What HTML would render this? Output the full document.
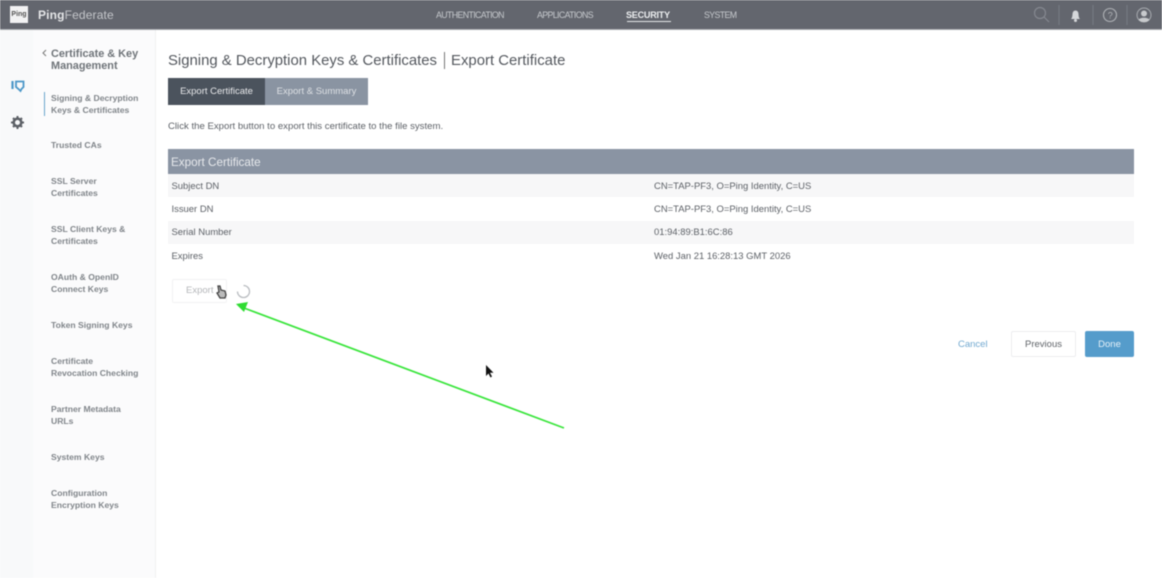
<!DOCTYPE html>
<html><head><meta charset="utf-8"><style>
html,body{margin:0;padding:0}
body{width:1162px;height:578px;position:relative;overflow:hidden;background:#fff;font-family:"Liberation Sans",sans-serif;color:#555b61;filter:blur(.5px)}
.a{position:absolute;white-space:nowrap}
.nav{font-size:8.8px;color:#c6c9cd;top:9.5px;letter-spacing:-.62px}
.s{font-size:8.6px;font-weight:bold;color:#80858a;left:51px;line-height:12px;margin-top:-1px}
.r{left:168px;width:966px;height:23px}
.t{font-size:9.45px;line-height:12px;color:#5d6167}
</style></head><body>
<div class="a" style="left:0;top:0;width:1162px;height:29px;background:#63666e;border-bottom:1px solid #a9acb0"></div>
<div class="a" style="left:10px;top:6px;width:18px;height:17px;background:#f2f2f3;color:#555;font-size:7px;line-height:17px;text-align:center;font-weight:bold">Ping</div>
<div class="a" style="left:38px;top:8px;font-size:12px;line-height:15px;color:#e4e5e7;letter-spacing:.15px"><b>Ping</b><span style="color:#c4c6ca">Federate</span></div>
<div class="a nav" style="left:436px">AUTHENTICATION</div>
<div class="a nav" style="left:537px">APPLICATIONS</div>
<div class="a nav" style="left:626px;color:#eceef0;font-weight:bold;font-size:9px;letter-spacing:-.2px">SECURITY</div>
<div class="a" style="left:627px;top:21px;width:44px;height:1px;background:#e6e8ea"></div>
<div class="a nav" style="left:704px">SYSTEM</div>
<svg class="a" style="left:1030px;top:3px" width="130" height="24" fill="none">
<circle cx="10" cy="10" r="5.5" stroke="#858890" stroke-width="1.2"/><path d="M14 14l5 5" stroke="#858890" stroke-width="1.2"/>
<path d="M29 2v20M63 2v20M97 2v20" stroke="#777a82"/>
<path d="M41 16c2-2 1-5 2-7 1-2 4-2 5 0 1 2 0 5 2 7z" fill="#d5d7da"/><circle cx="45.500" cy="17.500" r="1.500" fill="#d5d7da"/>
<circle cx="80" cy="12" r="6.500" stroke="#b0b3b7" stroke-width="1.100"/><text x="77.700" y="15.500" font-size="9" fill="#b0b3b7" font-family="Liberation Sans">?</text>
<circle cx="114" cy="12" r="7" stroke="#a8abb0" stroke-width="1"/><circle cx="114" cy="10.500" r="3" fill="#c8cacd"/><path d="M108.500 17c1-3 10-3 11 0l-3 2h-5z" fill="#c8cacd"/>
</svg>
<div class="a" style="left:0;top:30px;width:33px;height:548px;background:#f8f9fa"></div>
<div class="a" style="left:33px;top:30px;width:122px;height:548px;background:#fbfbfc;border-right:1px solid #f0f1f2"></div>
<svg class="a" style="left:10px;top:79px" width="16" height="14" fill="none"><path d="M6 2.500h7.500v5.500l-2 2-1 2-2-2-2.500-2z" stroke="#4b97c8" stroke-width="1.800"/><path d="M2.500 2v8" stroke="#4b97c8" stroke-width="2.200"/></svg>
<svg class="a" style="left:10px;top:115px" width="15" height="15"><circle cx="7.500" cy="7.500" r="3.800" fill="none" stroke="#5d6167" stroke-width="2.600"/><path d="M7.500 1v3M7.500 11v3M1 7.500h3M11 7.500h3M3 3l2 2M10 10l2 2M12 3l-2 2M5 10l-2 2" stroke="#5d6167" stroke-width="2"/></svg>
<svg class="a" style="left:41px;top:49px" width="7" height="9" fill="none"><path d="M5 1L2 4l3 3" stroke="#777" /></svg>
<div class="a" style="left:51px;top:48px;font-size:10.9px;font-weight:bold;color:#6f7479;line-height:12px">Certificate &amp; Key<br>Management</div>
<div class="a" style="left:44px;top:92px;width:1px;height:24px;background:#6aa5cc"></div>
<div class="a s" style="top:93px">Signing &amp; Decryption<br>Keys &amp; Certificates</div>
<div class="a s" style="top:140px">Trusted CAs</div>
<div class="a s" style="top:176px">SSL Server<br>Certificates</div>
<div class="a s" style="top:224px">SSL Client Keys &amp;<br>Certificates</div>
<div class="a s" style="top:272px">OAuth &amp; OpenID<br>Connect Keys</div>
<div class="a s" style="top:320px">Token Signing Keys</div>
<div class="a s" style="top:356px">Certificate<br>Revocation Checking</div>
<div class="a s" style="top:404px">Partner Metadata<br>URLs</div>
<div class="a s" style="top:452px">System Keys</div>
<div class="a s" style="top:488px">Configuration<br>Encryption Keys</div>
<div class="a" style="left:168px;top:53px;font-size:14.9px;line-height:17px;color:#54585e">Signing &amp; Decryption Keys &amp; Certificates</div>
<div class="a" style="left:444px;top:52px;width:1px;height:17px;background:#777"></div>
<div class="a" style="left:451px;top:53px;font-size:14.9px;line-height:17px;color:#54585e;letter-spacing:.01px">Export Certificate</div>
<div class="a" style="left:168px;top:78px;width:97px;height:27px;background:#4b535d;color:#e8e9eb;font-size:9.500px;line-height:27px;text-align:center">Export Certificate</div>
<div class="a" style="left:265px;top:78px;width:103px;height:27px;background:#8a94a2;color:#dde0e4;font-size:9.500px;line-height:27px;text-align:center">Export &amp; Summary</div>
<div class="a t" style="left:168px;top:121px;font-size:9.6px">Click the Export button to export this certificate to the file system.</div>
<div class="a" style="left:168px;top:149px;width:966px;height:25px;background:#8a94a3;color:#e7e9ec;font-size:11.7px;line-height:27px;text-indent:3px">Export Certificate</div>
<div class="a r" style="top:174px;background:#f7f7f8"></div>
<div class="a r" style="top:221px;background:#f7f7f8"></div>
<div class="a t" style="left:171.500px;top:181px">Subject DN</div><div class="a t" style="left:654px;top:181px">CN=TAP-PF3, O=Ping Identity, C=US</div>
<div class="a t" style="left:171.500px;top:204px">Issuer DN</div><div class="a t" style="left:654px;top:204px">CN=TAP-PF3, O=Ping Identity, C=US</div>
<div class="a t" style="left:171.500px;top:227px">Serial Number</div><div class="a t" style="left:654px;top:227px">01:94:89:B1:6C:86</div>
<div class="a t" style="left:171.500px;top:251px">Expires</div><div class="a t" style="left:654px;top:251px">Wed Jan 21 16:28:13 GMT 2026</div>
<div class="a" style="left:172px;top:279px;width:53px;height:22px;border:1px solid #f2f2f3;border-radius:2px"></div>
<div class="a" style="left:186px;top:285px;font-size:9.500px;color:#b4b6b9">Export</div>
<svg class="a" style="left:214px;top:284px" width="14" height="16"><path d="M4 2l2 0 1 4 4 1 1 4-1 3H6L3 9l2-1z" fill="#bbb" stroke="#444" stroke-width="1.300"/></svg>
<svg class="a" style="left:236px;top:283.500px" width="15" height="15" fill="none"><path d="M7.500 1.500a6 6 0 1 1-6 6" stroke="#b9bcc0" stroke-width="1.300"/></svg>
<div class="a" style="left:958px;top:338.500px;font-size:9.500px;color:#72a9d0">Cancel</div>
<div class="a" style="left:1011px;top:331px;width:63px;height:24px;border:1px solid #ecedef;border-radius:2px;text-align:center;line-height:26px;font-size:9.500px;color:#5f6368">Previous</div>
<div class="a" style="left:1085px;top:331px;width:49px;height:26px;background:#559ccb;border-radius:2px;text-align:center;line-height:27px;font-size:9.500px;color:#e6f1f8">Done</div>
<svg class="a" style="left:0;top:0" width="1162" height="578" fill="none">
<path d="M564 428L244 308" stroke="#39e53b" stroke-width="1.700"/><path d="M236 304l12-2-4 10z" fill="#2fdc32"/>
<path d="M486 365v11l2.500-2.500 2 4 1.500-1-2-3.800h3.500z" fill="#111"/>
</svg>
</body></html>
